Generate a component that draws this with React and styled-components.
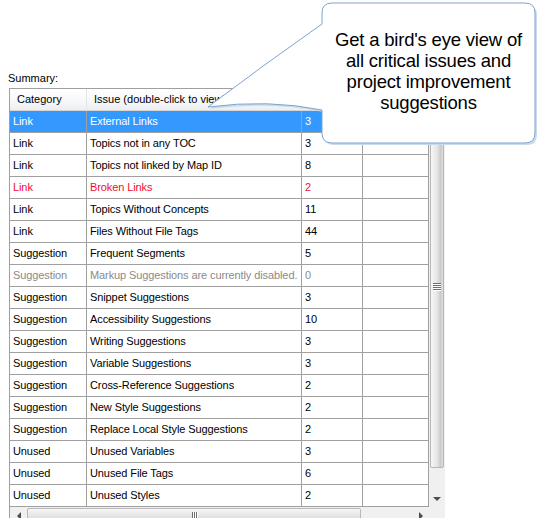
import styled, { createGlobalStyle } from 'styled-components';

const Global = createGlobalStyle`
  html, body {
    margin: 0;
    padding: 0;
    background: #ffffff;
  }
  body {
    font-family: "Liberation Sans", Arial, sans-serif;
    font-size: 11px;
    color: #000;
  }
`;

const rows = [
  ['Link', 'External Links', '3', 'selected'],
  ['Link', 'Topics not in any TOC', '3'],
  ['Link', 'Topics not linked by Map ID', '8'],
  ['Link', 'Broken Links', '2', 'error'],
  ['Link', 'Topics Without Concepts', '11'],
  ['Link', 'Files Without File Tags', '44'],
  ['Suggestion', 'Frequent Segments', '5'],
  ['Suggestion', 'Markup Suggestions are currently disabled.', '0', 'disabled'],
  ['Suggestion', 'Snippet Suggestions', '3'],
  ['Suggestion', 'Accessibility Suggestions', '10'],
  ['Suggestion', 'Writing Suggestions', '3'],
  ['Suggestion', 'Variable Suggestions', '3'],
  ['Suggestion', 'Cross-Reference Suggestions', '2'],
  ['Suggestion', 'New Style Suggestions', '2'],
  ['Suggestion', 'Replace Local Style Suggestions', '2'],
  ['Unused', 'Unused Variables', '3'],
  ['Unused', 'Unused File Tags', '6'],
  ['Unused', 'Unused Styles', '2'],
];

const Page = styled.div`
  position: relative;
  height: 518px;
  overflow: hidden;
  padding-top: 71px;
  box-sizing: border-box;
`;

const Label = styled.div`
  padding-left: 8px;
  line-height: 14px;
  margin-bottom: 3px;
`;

const Panel = styled.div`
  margin-left: 9px;
  width: 436px;
  box-sizing: border-box;
  border-top: 1px solid #a0a0a0;
  border-left: 1px solid #a0a0a0;
`;

const Body = styled.div`
  display: flex;
`;

const Grid = styled.div`
  display: grid;
  grid-template-columns: 77px 215px 61px 66px;
  width: 419px;
`;

const HeadCell = styled.div`
  height: 21px;
  line-height: 21px;
  padding-left: 7px;
  white-space: nowrap;
  overflow: hidden;
  background: linear-gradient(#ffffff, #f7f8f9 55%, #eceef1);
  border-bottom: 1px solid #d5d5d5;
  border-right: 1px solid #e3e4e6;
`;

const Cell = styled.div`
  height: 21px;
  line-height: 21px;
  padding-left: 3px;
  white-space: nowrap;
  overflow: hidden;
  letter-spacing: -0.1px;
  border-right: 1px solid #a0a0a0;
  border-bottom: 1px solid #a0a0a0;
  background: ${({ $state }) => ($state === 'selected' ? '#3399ff' : '#ffffff')};
  color: ${({ $state }) =>
    $state === 'selected' ? '#ffffff' : $state === 'error' ? '#ee1030' : $state === 'disabled' ? '#8a8a8a' : '#000000'};
`;

const VScroll = styled.div`
  width: 16px;
  display: flex;
  flex-direction: column;
  background: #f0f0f0;
`;

const Thumb = styled.div`
  flex: 1;
  margin: 16px 1px 22px 1px;
  border: 1px solid #b8b8b8;
  border-radius: 2px;
  background: ${({ $horizontal }) =>
    $horizontal
      ? 'linear-gradient(#f6f6f6, #e6e6e6 50%, #d2d2d2)'
      : 'linear-gradient(to right, #f6f6f6, #e6e6e6 50%, #cbcbcb 80%, #dedede)'};
  display: flex;
  align-items: center;
  justify-content: center;
`;

const Grip = styled.div`
  display: flex;
  flex-direction: ${({ $horizontal }) => ($horizontal ? 'row' : 'column')};
  gap: 1px;

  span {
    display: block;
    background: #6e6e6e;
    width: ${({ $horizontal }) => ($horizontal ? '1px' : '8px')};
    height: ${({ $horizontal }) => ($horizontal ? '7px' : '1px')};
    box-shadow: ${({ $horizontal }) => ($horizontal ? '1px 0 0 #fff' : '0 1px 0 #fff')};
  }
`;

const ArrowBox = styled.div`
  width: ${({ $w }) => $w}px;
  height: ${({ $h }) => $h}px;
  display: flex;
  align-items: center;
  justify-content: center;
  flex-shrink: 0;
`;

const Triangle = styled.div`
  width: 0;
  height: 0;
  border-style: solid;
  border-color: transparent;
  ${({ $dir }) =>
    $dir === 'down'
      ? 'border-width: 4px 4px 0 4px; border-top-color: #4d4d4d;'
      : $dir === 'right'
      ? 'border-width: 4px 0 4px 4px; border-left-color: #4d4d4d;'
      : 'border-width: 4px 4px 4px 0; border-right-color: #4d4d4d;'}
`;

const HScroll = styled.div`
  display: flex;
  height: 17px;
  background: #f0f0f0;
`;

const HTrack = styled.div`
  width: 419px;
  display: flex;
  align-items: stretch;
`;

const HThumb = styled(Thumb)`
  flex: none;
  width: 332px;
  margin: 1px 0;
`;

const Spacer = styled.div`
  flex: 1;
`;

const Corner = styled.div`
  width: 16px;
  background: #f0f0f0;
`;

const Callout = styled.div`
  position: absolute;
  left: 0;
  top: 0;
  width: 539px;
  height: 150px;
  pointer-events: none;
`;

const CalloutShape = styled.svg`
  position: absolute;
  left: 0;
  top: 0;
`;

const CalloutText = styled.div`
  position: absolute;
  left: 322px;
  top: 29px;
  width: 213px;
  text-align: center;
  font-family: "Liberation Sans", Arial, sans-serif;
  font-size: 18.5px;
  line-height: 21px;
  letter-spacing: -0.2px;
  color: #000;
`;

const shape =
  'M 332 3 H 525 Q 535 3 535 13 V 133 Q 535 143 525 143 H 332 Q 322 143 322 133 V 110 Q 268 99 208 107 Q 262 66 322 24 V 13 Q 322 3 332 3 Z';

export default function App() {
  return (
    <Page>
      <Global />
      <Label>Summary:</Label>
      <Panel>
        <Body>
          <Grid>
            <HeadCell>Category</HeadCell>
            <HeadCell>Issue (double-click to view)</HeadCell>
            <HeadCell>Count</HeadCell>
            <HeadCell />
            {rows.map(([cat, issue, count, state], i) => (
              <Row key={i} cat={cat} issue={issue} count={count} state={state} />
            ))}
          </Grid>
          <VScroll>
            <Thumb>
              <Grip>
                <span />
                <span />
                <span />
                <span />
              </Grip>
            </Thumb>
            <ArrowBox $w={16} $h={17}>
              <Triangle $dir="down" />
            </ArrowBox>
          </VScroll>
        </Body>
        <HScroll>
          <HTrack>
            <ArrowBox $w={17} $h={17}>
              <Triangle $dir="left" />
            </ArrowBox>
            <HThumb $horizontal>
              <Grip $horizontal>
                <span />
                <span />
                <span />
              </Grip>
            </HThumb>
            <Spacer />
            <ArrowBox $w={17} $h={17}>
              <Triangle $dir="right" />
            </ArrowBox>
          </HTrack>
          <Corner />
        </HScroll>
      </Panel>
      <Callout>
        <CalloutShape width="539" height="150" viewBox="0 0 539 150">
          <path d={shape} fill="#c9dcef" transform="translate(2 2)" />
          <path d={shape} fill="#ffffff" stroke="#7fa3cc" strokeWidth="1" />
        </CalloutShape>
        <CalloutText>
          Get a bird's eye view of
          <br />
          all critical issues and
          <br />
          project improvement
          <br />
          suggestions
        </CalloutText>
      </Callout>
    </Page>
  );
}

function Row({ cat, issue, count, state }) {
  return (
    <>
      <Cell $state={state}>{cat}</Cell>
      <Cell $state={state}>{issue}</Cell>
      <Cell $state={state}>{count}</Cell>
      <Cell $state={state === 'selected' ? undefined : state} />
    </>
  );
}
